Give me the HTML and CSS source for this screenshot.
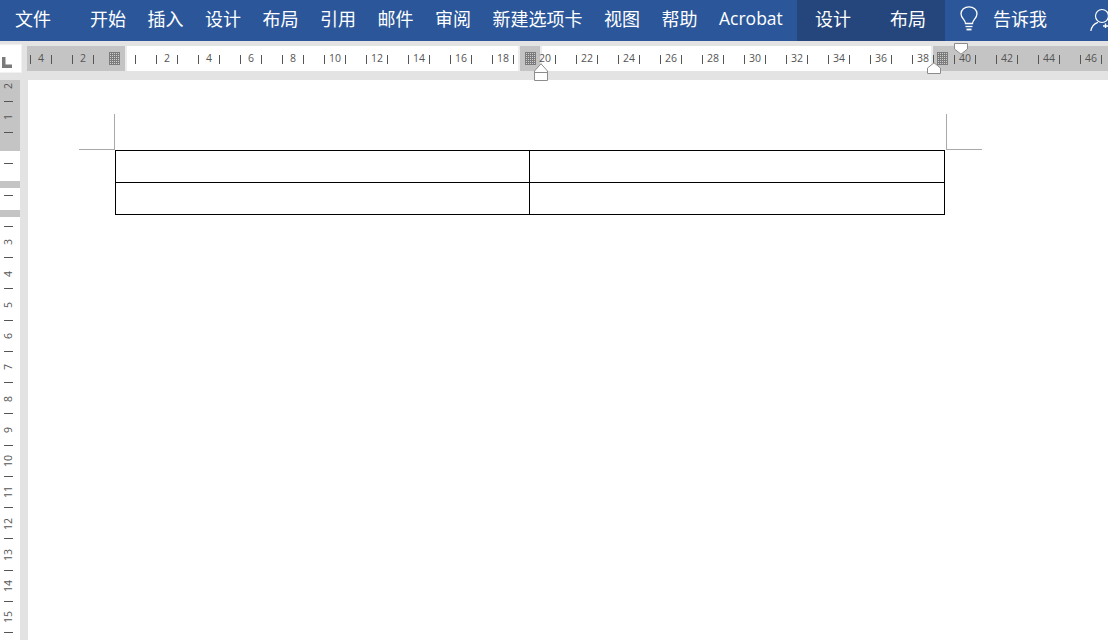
FILE: index.html
```html
<!DOCTYPE html>
<html lang="zh-CN">
<head>
<meta charset="utf-8">
<title>Word</title>
<link rel="stylesheet" href="styles.css">
</head>
<body>
<div class="app">
  <header class="tabbar">
    <span class="tab tab-file">文件</span>
    <nav class="tabs">
      <span class="tab">开始</span>
      <span class="tab">插入</span>
      <span class="tab">设计</span>
      <span class="tab">布局</span>
      <span class="tab">引用</span>
      <span class="tab">邮件</span>
      <span class="tab">审阅</span>
      <span class="tab">新建选项卡</span>
      <span class="tab">视图</span>
      <span class="tab">帮助</span>
      <span class="tab tab-latin">Acrobat</span>
    </nav>
    <div class="context-tabs">
      <span class="tab">设计</span>
      <span class="tab">布局</span>
    </div>
    <div class="tell-me">
      <svg class="bulb" width="18" height="25" viewBox="0 0 18 25" fill="none" stroke="#fff" stroke-width="1.3">
        <path d="M5.5 17.5 C5.5 13.5 1 12.5 1 7.8 C1 3.6 4.6 .8 9 .8 C13.4 .8 17 3.6 17 7.8 C17 12.5 12.5 13.5 12.5 17.5 Z"/>
        <path d="M5.5 20.5 H12.5"/>
        <path d="M6.5 23.5 H11.5" stroke-width="1.8"/>
      </svg>
      <span class="tab">告诉我</span>
    </div>
    <svg class="person" width="18" height="24" viewBox="0 0 18 24" fill="none" stroke="#fff" stroke-width="1.2">
      <circle cx="12" cy="8" r="6.5"/>
      <path d="M.8 23 C1.6 18.5 4.5 15.5 8 14.4"/>
      <path d="M13 18 H18 M15.5 15.5 V20" stroke-width="1.4"/>
    </svg>
  </header>

  <div class="ruler-strip">
    <div class="corner">
      <svg width="11" height="11" viewBox="0 0 11 11"><path class="corner-mark" d="M0 0 H3.5 V7.5 H10 V11 H0 Z"/></svg>
    </div>
    <div class="hruler">
      <div class="hbands">
        <div class="band band-left"><i class="dither"></i></div>
        <div class="band-edge"></div>
        <div class="band-white band-w1"></div>
        <div class="band-edge"></div>
        <div class="band band-mid"><i class="dither"></i></div>
        <div class="band-edge"></div>
        <div class="band-white band-w2"></div>
        <div class="band-edge"></div>
        <div class="band band-right"><i class="dither"></i></div>
      </div>
      <div class="hscale">
        <div class="hcell"><i></i><b>4</b><i></i></div>
        <div class="hcell"><i></i><b>2</b><i></i></div>
        <div class="hcell no-first"><i></i><b></b><i></i></div>
        <div class="hcell"><i></i><b>2</b><i></i></div>
        <div class="hcell"><i></i><b>4</b><i></i></div>
        <div class="hcell"><i></i><b>6</b><i></i></div>
        <div class="hcell"><i></i><b>8</b><i></i></div>
        <div class="hcell"><i></i><b>10</b><i></i></div>
        <div class="hcell"><i></i><b>12</b><i></i></div>
        <div class="hcell"><i></i><b>14</b><i></i></div>
        <div class="hcell"><i></i><b>16</b><i></i></div>
        <div class="hcell"><i></i><b>18</b><i></i></div>
        <div class="hcell no-first"><i></i><b>20</b><i></i></div>
        <div class="hcell"><i></i><b>22</b><i></i></div>
        <div class="hcell"><i></i><b>24</b><i></i></div>
        <div class="hcell"><i></i><b>26</b><i></i></div>
        <div class="hcell"><i></i><b>28</b><i></i></div>
        <div class="hcell"><i></i><b>30</b><i></i></div>
        <div class="hcell"><i></i><b>32</b><i></i></div>
        <div class="hcell"><i></i><b>34</b><i></i></div>
        <div class="hcell"><i></i><b>36</b><i></i></div>
        <div class="hcell"><i></i><b>38</b><i></i></div>
        <div class="hcell"><i></i><b>40</b><i></i></div>
        <div class="hcell"><i></i><b>42</b><i></i></div>
        <div class="hcell"><i></i><b>44</b><i></i></div>
        <div class="hcell"><i></i><b>46</b><i></i></div>
      </div>
    </div>
    <svg class="marker marker-hanging" width="14" height="18" viewBox="0 0 14 18">
      <path class="marker-shape" d="M.5 8 L7 .8 L13.5 8 V17.5 H.5 Z"/>
      <path class="marker-line" d="M.5 9.5 H13.5"/>
    </svg>
    <svg class="marker marker-right" width="14" height="12" viewBox="0 0 14 12">
      <path class="marker-shape" d="M.5 6 L7 .8 L13.5 6 V11.5 H.5 Z"/>
    </svg>
    <svg class="marker marker-first" width="14" height="12" viewBox="0 0 14 12">
      <path class="marker-shape" d="M.5 .5 H13.5 V6 L7 11.2 L.5 6 Z"/>
    </svg>
  </div>

  <div class="workspace">
    <aside class="vruler">
      <div class="vbands">
        <div class="vband vb-1"></div>
        <div class="vwhite vw-1"></div>
        <div class="vband vb-2"></div>
        <div class="vwhite vw-2"></div>
        <div class="vband vb-3"></div>
      </div>
      <div class="vscale">
        <div class="vcell"><b>2</b></div>
        <div class="vcell"><b>1</b></div>
        <div class="vcell"><b></b></div>
        <div class="vcell"><b></b></div>
        <div class="vcell"><b></b></div>
        <div class="vcell"><b>3</b></div>
        <div class="vcell"><b>4</b></div>
        <div class="vcell"><b>5</b></div>
        <div class="vcell"><b>6</b></div>
        <div class="vcell"><b>7</b></div>
        <div class="vcell"><b>8</b></div>
        <div class="vcell"><b>9</b></div>
        <div class="vcell"><b>10</b></div>
        <div class="vcell"><b>11</b></div>
        <div class="vcell"><b>12</b></div>
        <div class="vcell"><b>13</b></div>
        <div class="vcell"><b>14</b></div>
        <div class="vcell"><b>15</b></div>
      </div>
    </aside>
    <div class="gutter"></div>
    <main class="page">
      <div class="crop-row">
        <div class="crop crop-left"></div>
        <div class="crop crop-right"></div>
      </div>
      <table class="doc-table">
        <tr><td></td><td></td></tr>
        <tr><td></td><td></td></tr>
      </table>
    </main>
  </div>
</div>
</body>
</html>
```
FILE: styles.css
```css
* { box-sizing: border-box; }
html, body { margin: 0; padding: 0; background: #fff; }
.app {
  width: 1108px;
  height: 640px;
  overflow: hidden;
  display: flex;
  flex-direction: column;
}

/* Tab bar */
.tabbar {
  flex: 0 0 41px;
  display: flex;
  background: #2b579a;
  color: #fff;
  padding-left: 15px;
  font: 18px/36px "Noto Sans CJK SC", "Open Sans", sans-serif;
  position: relative;
}
.tab { white-space: nowrap; }
.tab-file { width: 75px; }
.tabs { display: flex; gap: 21.5px; width: 707px; }
.tab-latin { font-family: "Open Sans", sans-serif; font-size: 17.5px; }
.context-tabs {
  width: 148px;
  padding-left: 18px;
  display: flex;
  gap: 39px;
  background: #24467c;
}
.tell-me {
  margin-left: 15px;
  display: flex;
  gap: 15px;
}
.bulb { margin-top: 6px; }
.person { position: absolute; left: 1090px; top: 8px; }

/* Horizontal ruler strip */
.ruler-strip {
  flex: 0 0 39px;
  display: flex;
  background: #e3e3e3;
  position: relative;
}
.corner {
  width: 22px;
  height: 29px;
  margin-top: 3px;
  background: #fff;
  border: 1px solid #f1f1f1;
  border-left: 0;
  padding: 12px 0 0 2px;
}
.corner svg { display: block; }
.corner-mark { fill: #7a7a7a; }
.hruler {
  margin: 5px 0 0 5px;
  width: 1081px;
  height: 25px;
  position: relative;
  overflow: hidden;
}
.hbands { display: flex; height: 25px; }
.band { background: #c4c4c4; display: flex; align-items: center; }
.band-left { width: 98px; justify-content: flex-end; padding-right: 5px; }
.band-mid { width: 20px; justify-content: center; }
.band-right { width: 175px; padding-left: 4px; }
.band-white { background: #fff; }
.band-w1 { width: 392px; }
.band-w2 { width: 390px; }
.band-edge { width: 2px; background: #ececec; }
.dither {
  display: block;
  flex: none;
  width: 11px;
  height: 13px;
  background-color: #d0d0d0;
  background-image:
    linear-gradient(90deg, #6f6f6f 1px, transparent 1px),
    linear-gradient(#6f6f6f 1px, transparent 1px);
  background-size: 2px 2px;
  background-blend-mode: normal;
  opacity: .85;
}
.hscale {
  position: absolute;
  left: -7px;
  top: 0;
  display: flex;
  height: 25px;
}
.hcell {
  flex: 0 0 42px;
  padding: 0 10px;
  display: flex;
  justify-content: space-between;
  align-items: center;
}
.hcell i { width: 1px; height: 9px; margin-top: 1px; background: #555; }
.hcell.no-first i:first-child { background: transparent; }
.hcell b {
  font: 400 10.5px/25px "Open Sans", sans-serif;
  color: #555;
}

/* Indent markers */
.marker { position: absolute; overflow: visible; }
.marker-shape { fill: #fff; stroke: #8c8c8c; stroke-width: 1; }
.marker-line { fill: none; stroke: #8c8c8c; stroke-width: 1; }
.marker-hanging { left: 534px; top: 22px; }
.marker-right { left: 927px; top: 21px; }
.marker-first { left: 954px; top: 2px; }

/* Workspace */
.workspace { flex: 1; display: flex; min-height: 0; }
.vruler {
  flex: 0 0 20px;
  position: relative;
  overflow: hidden;
}
.vbands { display: flex; flex-direction: column; height: 100%; }
.vband { background: #c4c4c4; }
.vb-1 { height: 71px; }
.vb-2 { height: 7px; }
.vb-3 { height: 7px; }
.vwhite { background: #fff; }
.vw-1 { height: 30px; }
.vw-2 { height: 22px; }
.vscale {
  position: absolute;
  left: 0;
  top: -9.4px;
  width: 20px;
}
.vcell {
  height: 31.25px;
  display: flex;
  align-items: center;
  justify-content: center;
  position: relative;
}
.vcell::after {
  content: "";
  position: absolute;
  left: 4px;
  bottom: 0;
  width: 9px;
  height: 1px;
  background: #555;
}
.vcell b {
  font: 400 10.5px/16px "Open Sans", sans-serif;
  color: #555;
  writing-mode: vertical-rl;
  transform: rotate(180deg);
  margin-right: 4px;
}
.gutter { flex: 0 0 8px; background: #e3e3e3; }

/* Page */
.page { flex: 1; background: #fff; padding: 34px 0 0 51px; }
.crop-row {
  width: 903px;
  height: 36px;
  display: flex;
  justify-content: space-between;
}
.crop { width: 36px; height: 36px; border-bottom: 1px solid #a9a9a9; }
.crop-left { border-right: 1px solid #a9a9a9; }
.crop-right { border-left: 1px solid #a9a9a9; }
.doc-table {
  margin-left: 36px;
  width: 830px;
  border-collapse: collapse;
  table-layout: fixed;
}
.doc-table td {
  border: 1px solid #000;
  height: 32px;
  padding: 0;
}
.doc-table td:first-child { width: 414px; }
```
